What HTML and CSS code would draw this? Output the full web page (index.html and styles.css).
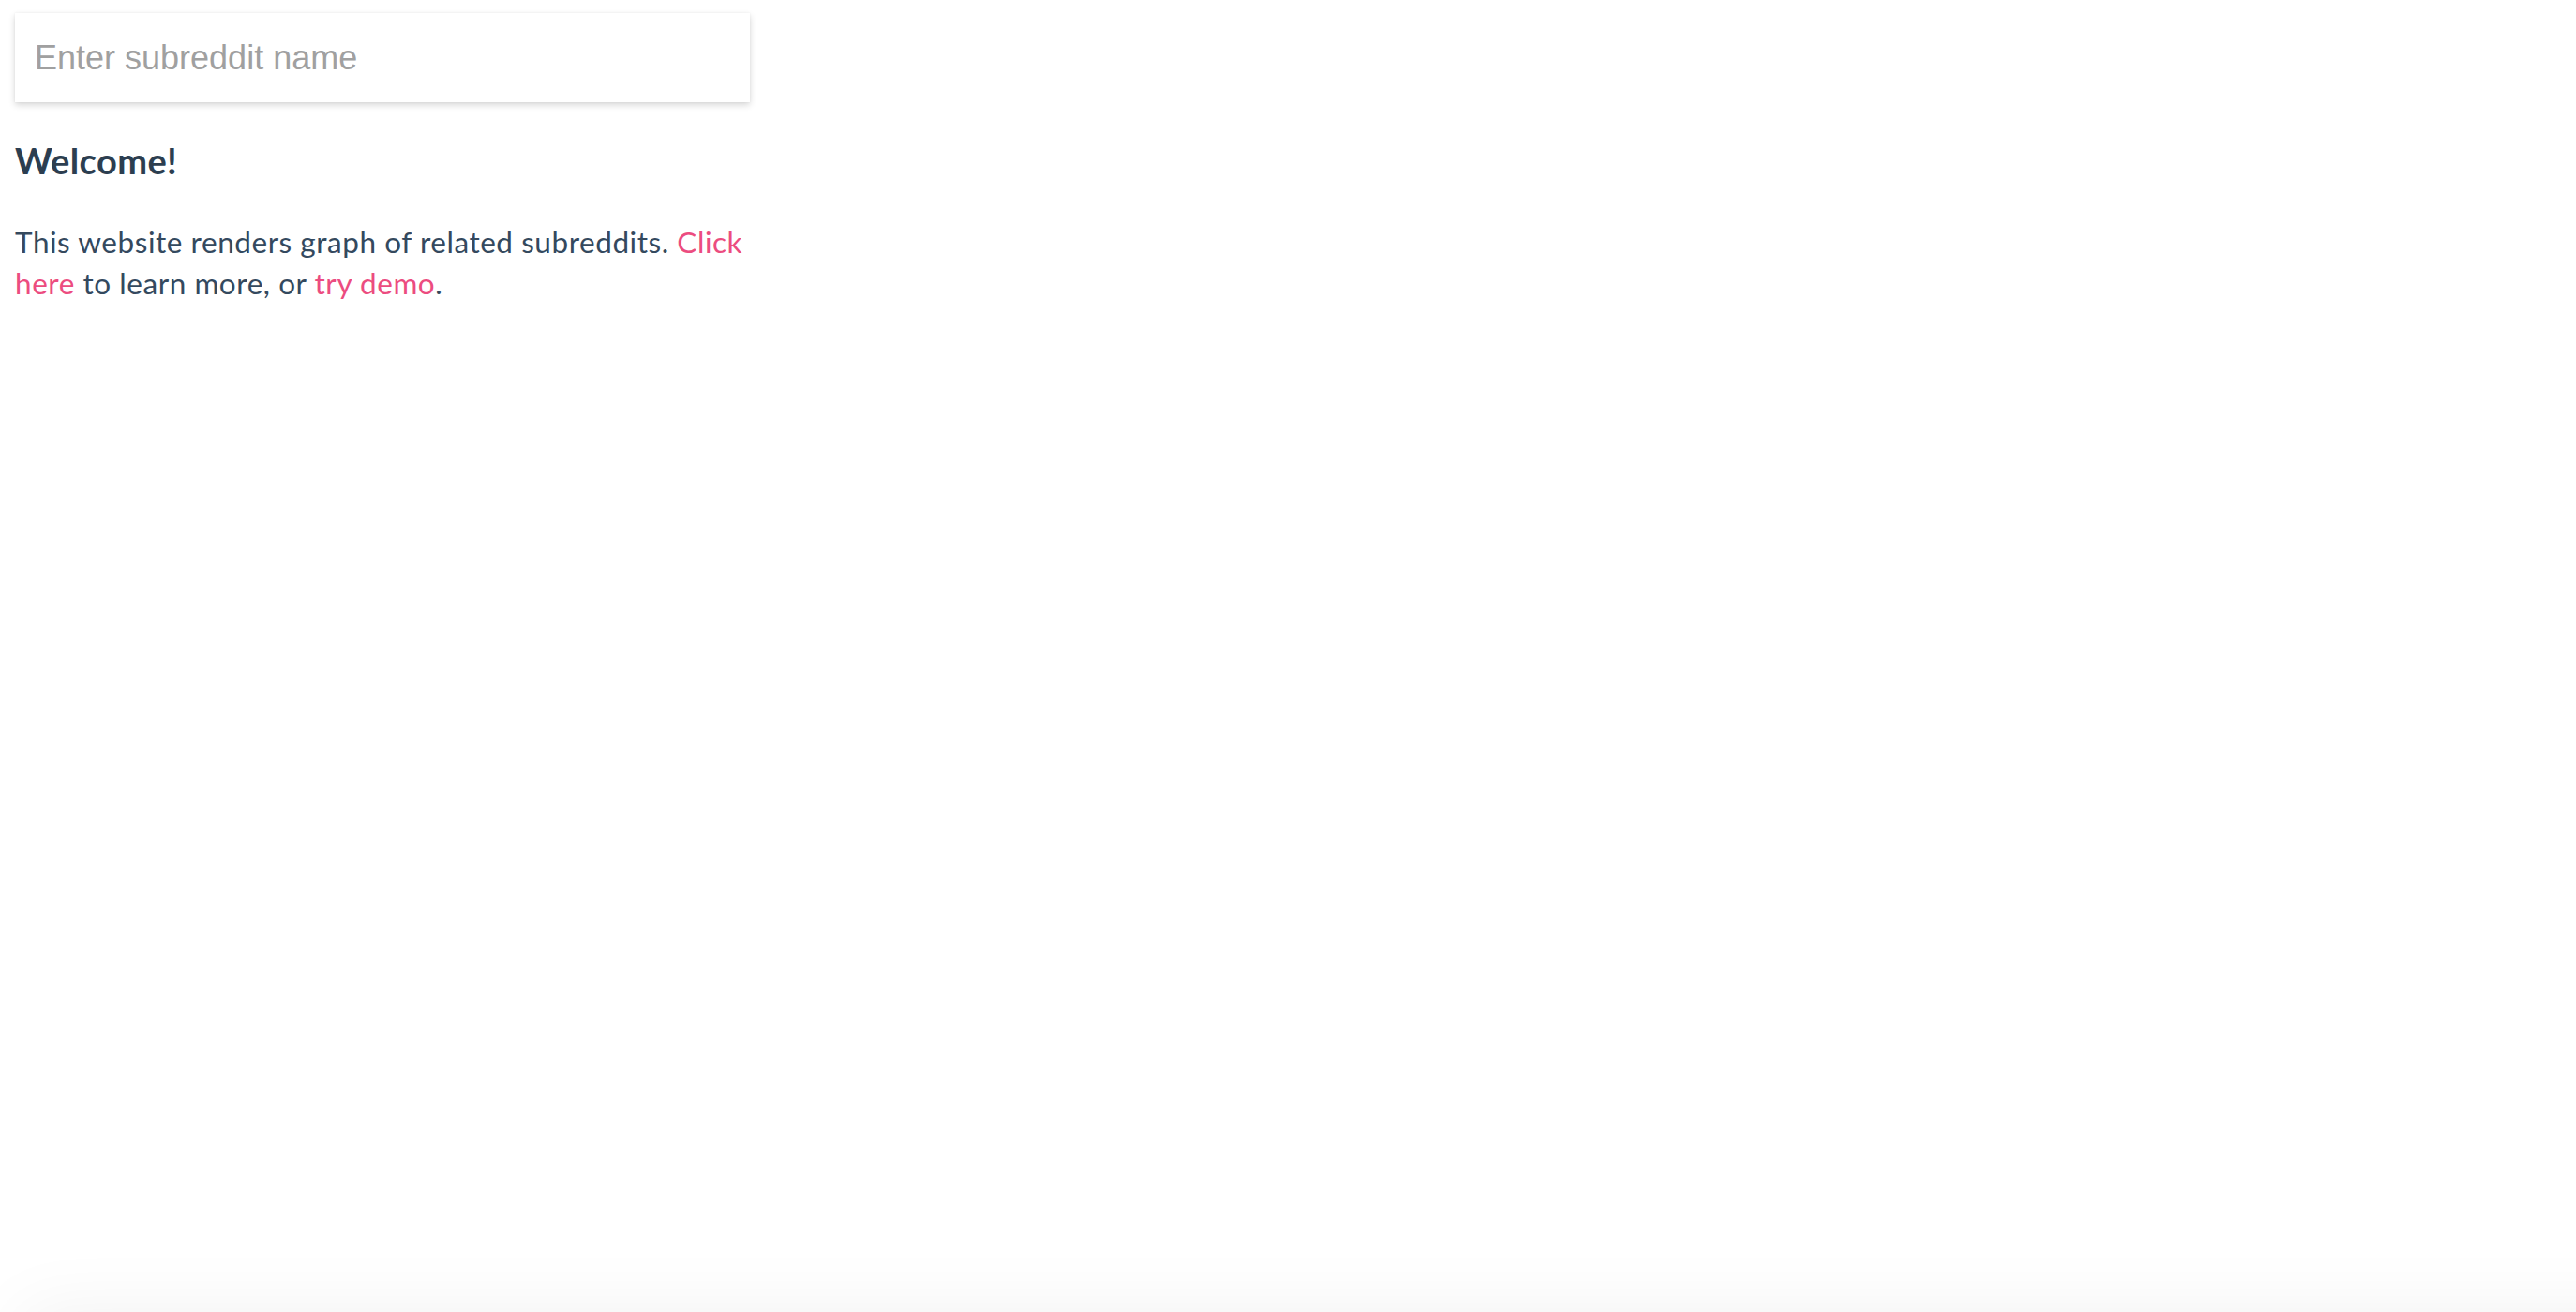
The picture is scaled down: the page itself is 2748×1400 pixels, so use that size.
FILE: index.html
```html
<!DOCTYPE html>
<html lang="en">
<head>
<meta charset="utf-8">
<title>Related subreddits</title>
<link rel="stylesheet" href="styles.css">
</head>
<body>
<div class="sidebar">
  <div class="search-box">
    <input class="search-input" type="text" placeholder="Enter subreddit name">
  </div>
  <h3 class="welcome-title">Welcome!</h3>
  <p class="welcome-text">This website renders graph of related subreddits. <a class="link" href="#">Click here</a> to learn more, or <a class="link" href="#">try demo</a>.</p>
</div>
<div class="bottom-panel"></div>
</body>
</html>
```
FILE: styles.css
```css
html, body {
  margin: 0;
  padding: 0;
  background: #ffffff;
  overflow: hidden;
  height: 100%;
}

body {
  font-family: "Lato", "Open Sans", sans-serif;
  color: #2c3e50;
}

.sidebar {
  width: 784px;
  margin: 14px 0 0 16px;
}

.search-box {
  background: #ffffff;
  box-shadow: 0 3px 7px rgba(0, 0, 0, 0.16), 0 0 2px rgba(0, 0, 0, 0.06);
}

.search-input {
  display: block;
  box-sizing: border-box;
  width: 100%;
  height: 95px;
  border: none;
  outline: none;
  background: transparent;
  padding: 0 0 0 21px;
  font-family: "Liberation Sans", Arial, sans-serif;
  font-size: 36px;
  color: #333;
}

.search-input::placeholder {
  color: #a0a0a0;
}

.welcome-title {
  margin: 39px 0 0 0;
  font-size: 38px;
  line-height: 46px;
  font-weight: 700;
  letter-spacing: 0.4px;
  color: #2c3e50;
}

.welcome-text {
  margin: 42px 0 0 0;
  font-size: 31.5px;
  line-height: 44px;
  letter-spacing: 0.55px;
  color: #34495e;
}

.link {
  color: #ec4c80;
  text-decoration: none;
}

.bottom-panel {
  position: fixed;
  left: 24px;
  right: -100px;
  top: 1400px;
  height: 200px;
  background: #fff;
  box-shadow: 0 0 80px rgba(0, 0, 0, 0.06);
}
```
